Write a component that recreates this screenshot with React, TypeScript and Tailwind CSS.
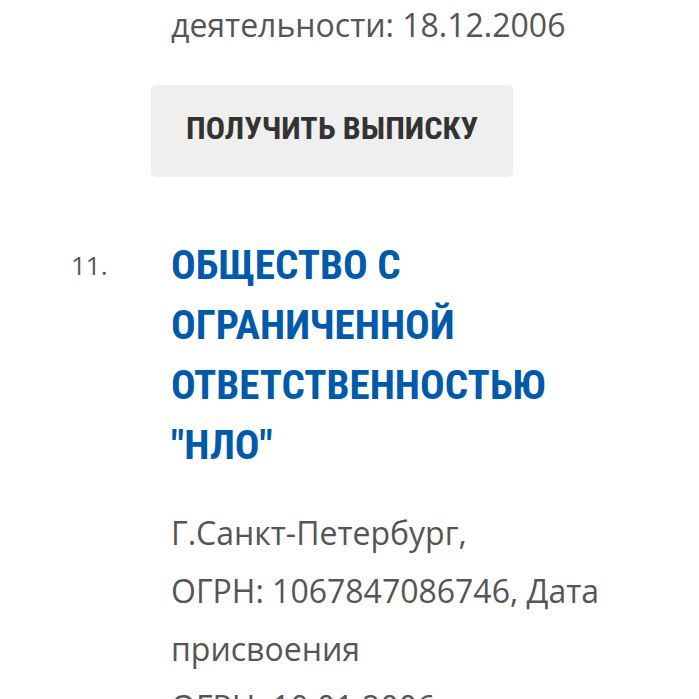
export default function App() {
  return (
    <main className="h-screen overflow-hidden bg-white pl-[71px] pr-12 font-['Open_Sans','Noto_Sans',sans-serif] text-[32px] leading-[58px] text-[#555555]">
      <ol>
        <li className="flex">
          <div className="w-[100px] shrink-0" />
          <div className="grow">
            <p className="-mt-1">деятельности: 18.12.2006</p>
            <button className="-ml-5 mt-[31px] block rounded-[5px] bg-[#efefef] px-[35px] pt-[19px] pb-[25px] font-['Roboto_Condensed',Roboto,sans-serif] text-[32px] font-bold leading-[48px] text-[#333333]">
              ПОЛУЧИТЬ ВЫПИСКУ
            </button>
          </div>
        </li>
        <li className="mt-14 flex">
          <span className="w-[100px] shrink-0 text-[26px] leading-[64px]">11.</span>
          <div className="grow">
            <h2 className="pt-[2px] font-['Roboto_Condensed',Roboto,sans-serif] text-[41px] font-bold leading-[60px] text-[#0059ab]">
              <a href="#nlo">
                ОБЩЕСТВО С<br />ОГРАНИЧЕННОЙ<br />ОТВЕТСТВЕННОСТЬЮ<br />"НЛО"
              </a>
            </h2>
            <p className="mt-[29px]">
              Г.Санкт-Петербург,<br />ОГРН: 1067847086746, Дата<br />присвоения<br />ОГРН: 10.01.2006
            </p>
          </div>
        </li>
      </ol>
    </main>
  );
}
